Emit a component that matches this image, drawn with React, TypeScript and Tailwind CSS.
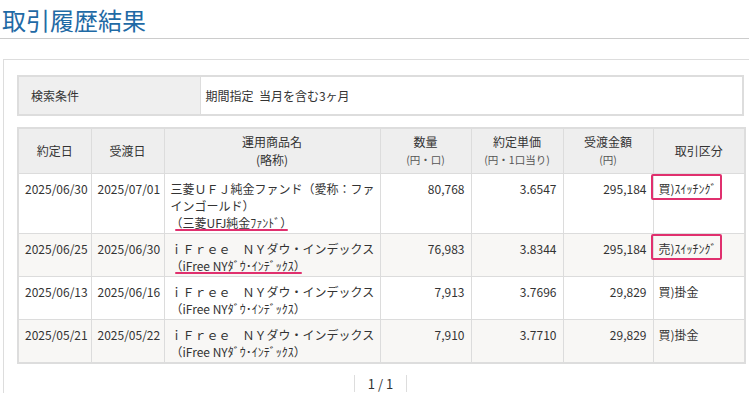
import React, { ReactNode } from "react"

const font = { fontFamily: '"Noto Sans CJK JP", "Noto Sans", sans-serif' }

interface Trade {
    date: string
    settle: string
    name: ReactNode
    short: string
    mark?: boolean
    qty: string
    price: string
    amount: string
    kind: string
    boxed?: boolean
}

const trades: Trade[] = [
    {
        date: "2025/06/30",
        settle: "2025/07/01",
        name: "三菱ＵＦＪ純金ファンド（愛称：ファインゴールド）",
        short: "（三菱UFJ純金ﾌｧﾝﾄﾞ）",
        mark: true,
        qty: "80,768",
        price: "3.6547",
        amount: "295,184",
        kind: "買)ｽｲｯﾁﾝｸﾞ",
        boxed: true,
    },
    {
        date: "2025/06/25",
        settle: "2025/06/30",
        name: "ｉＦｒｅｅ　ＮＹダウ・インデックス",
        short: "（iFree NYﾀﾞｳ･ｲﾝﾃﾞｯｸｽ）",
        mark: true,
        qty: "76,983",
        price: "3.8344",
        amount: "295,184",
        kind: "売)ｽｲｯﾁﾝｸﾞ",
        boxed: true,
    },
    {
        date: "2025/06/13",
        settle: "2025/06/16",
        name: "ｉＦｒｅｅ　ＮＹダウ・インデックス",
        short: "（iFree NYﾀﾞｳ･ｲﾝﾃﾞｯｸｽ）",
        qty: "7,913",
        price: "3.7696",
        amount: "29,829",
        kind: "買)掛金",
    },
    {
        date: "2025/05/21",
        settle: "2025/05/22",
        name: "ｉＦｒｅｅ　ＮＹダウ・インデックス",
        short: "（iFree NYﾀﾞｳ･ｲﾝﾃﾞｯｸｽ）",
        qty: "7,910",
        price: "3.7710",
        amount: "29,829",
        kind: "買)掛金",
    },
]

const Th: React.FC<{ main: string; sub?: string; small?: boolean }> = ({ main, sub, small }) => (
    <th className="border border-[#dcdcdc] bg-[#eeeeee] py-[4px] text-center align-middle font-normal leading-[18px]">
        <div>{main}</div>
        {sub && <div className={small ? "text-[10.5px] text-[#555]" : ""}>{sub}</div>}
    </th>
)

const td = "border border-[#dcdcdc] px-[6px] pt-[6px] pb-[2px] align-top leading-[17px]"

export default function App() {
    return (
        <div className="min-h-[393px] w-[749px] overflow-hidden bg-white text-[12px] text-[#333]" style={font}>
            <div className="border-b border-[#cccccc] pt-[4px] pb-[2px] pl-[2px]">
                <h1 className="text-[24px] leading-[32px] text-[#1f6aa5]">取引履歴結果</h1>
            </div>

            <div className="mt-[20px] ml-[3px] border-t border-l border-[#dddddd] pt-[15px] pl-[13px] pr-[5px] pb-[10px]">
                <table className="w-full border-collapse border-2 border-[#dddddd]">
                    <tbody>
                        <tr>
                            <td className="w-[182px] bg-[#efefef] py-[10px] pl-[12px] leading-[17px]">検索条件</td>
                            <td className="border-l border-[#dddddd] py-[10px] pl-[5px] leading-[17px]">期間指定&nbsp; 当月を含む3ヶ月</td>
                        </tr>
                    </tbody>
                </table>

                <table className="mt-[11px] w-full table-fixed border-collapse border-2 border-[#dddddd]">
                    <colgroup>
                        <col className="w-[73px]" />
                        <col className="w-[73px]" />
                        <col className="w-[216px]" />
                        <col className="w-[91px]" />
                        <col className="w-[92px]" />
                        <col className="w-[90px]" />
                        <col className="w-[92px]" />
                    </colgroup>
                    <thead>
                        <tr>
                            <Th main="約定日" />
                            <Th main="受渡日" />
                            <Th main="運用商品名" sub="(略称)" />
                            <Th main="数量" sub="(円・口)" small />
                            <Th main="約定単価" sub="(円・1口当り)" small />
                            <Th main="受渡金額" sub="(円)" small />
                            <Th main="取引区分" />
                        </tr>
                    </thead>
                    <tbody>
                        {trades.map((t, i) => (
                            <tr key={i} className={i % 2 === 1 ? "bg-[#f8f7f5]" : "bg-white"}>
                                <td className={td}>{t.date}</td>
                                <td className={td}>{t.settle}</td>
                                <td className={`${td} pr-[4px]`}>
                                    <div>{t.name}</div>
                                    <div>
                                        <span className="relative">
                                            {t.short}
                                            {t.mark && (
                                                <span className="absolute left-[4px] right-[4px] bottom-[0px] h-[2px] rounded-full bg-[#e0306e]" />
                                            )}
                                        </span>
                                    </div>
                                </td>
                                <td className={`${td} text-right`}>{t.qty}</td>
                                <td className={`${td} text-right`}>{t.price}</td>
                                <td className={`${td} text-right`}>{t.amount}</td>
                                <td className={`${td} pl-[5px]`}>
                                    <span className="relative">
                                        {t.kind}
                                        {t.boxed && (
                                            <span className="absolute -left-[8px] -right-[5px] -top-[6px] -bottom-[3px] rounded-[2px] border-2 border-[#e0306e]" />
                                        )}
                                    </span>
                                </td>
                            </tr>
                        ))}
                    </tbody>
                </table>

                <div className="mt-[11px] flex justify-center">
                    <div className="border-x border-[#dddddd] px-[13px] text-[13px] leading-[17px]">1 / 1</div>
                </div>
            </div>
        </div>
    )
}
